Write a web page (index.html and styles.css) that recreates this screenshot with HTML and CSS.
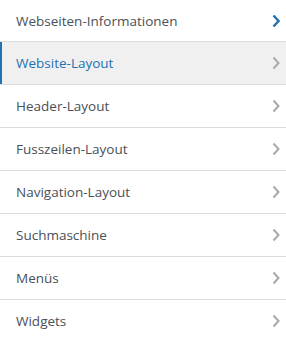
FILE: index.html
```html
<!DOCTYPE html>
<html lang="de">
<head>
    <meta charset="UTF-8">
    <meta name="viewport" content="width=device-width, initial-scale=1.0">
    <title>Customizer</title>
    <link rel="stylesheet" href="styles.css">
</head>
<body>
    <ul class="panel-list">
        <li class="panel-item first">
            <span>Webseiten-Informationen</span>
            <svg class="chevron" viewBox="0 0 8 14"><path d="M1.5 1.5 L6.5 7 L1.5 12.5"/></svg>
        </li>
        <li class="panel-item active">
            <span>Website-Layout</span>
            <svg class="chevron" viewBox="0 0 8 14"><path d="M1.5 1.5 L6.5 7 L1.5 12.5"/></svg>
        </li>
        <li class="panel-item">
            <span>Header-Layout</span>
            <svg class="chevron" viewBox="0 0 8 14"><path d="M1.5 1.5 L6.5 7 L1.5 12.5"/></svg>
        </li>
        <li class="panel-item">
            <span>Fusszeilen-Layout</span>
            <svg class="chevron" viewBox="0 0 8 14"><path d="M1.5 1.5 L6.5 7 L1.5 12.5"/></svg>
        </li>
        <li class="panel-item">
            <span>Navigation-Layout</span>
            <svg class="chevron" viewBox="0 0 8 14"><path d="M1.5 1.5 L6.5 7 L1.5 12.5"/></svg>
        </li>
        <li class="panel-item">
            <span>Suchmaschine</span>
            <svg class="chevron" viewBox="0 0 8 14"><path d="M1.5 1.5 L6.5 7 L1.5 12.5"/></svg>
        </li>
        <li class="panel-item">
            <span>Menüs</span>
            <svg class="chevron" viewBox="0 0 8 14"><path d="M1.5 1.5 L6.5 7 L1.5 12.5"/></svg>
        </li>
        <li class="panel-item">
            <span>Widgets</span>
            <svg class="chevron" viewBox="0 0 8 14"><path d="M1.5 1.5 L6.5 7 L1.5 12.5"/></svg>
        </li>
    </ul>
</body>
</html>
```

FILE: styles.css
```css
body {
    margin: 0;
    background: #ffffff;
    font-family: "Open Sans", "Noto Sans", sans-serif;
}

.panel-list {
    list-style: none;
    margin: 0;
    padding: 0;
}

.panel-item {
    display: flex;
    align-items: center;
    justify-content: space-between;
    height: 42px;
    padding: 0 6px 0 16px;
    border-bottom: 1px solid #dcdcde;
    color: #4a5057;
    font-size: 13.5px;
    font-weight: 500;
    box-sizing: content-box;
}

.panel-item.first {
    height: 41px;
}

.panel-item.active {
    background-color: #f0f0f1;
    color: #2271b1;
    box-shadow: inset 2px 0 0 #2271b1;
}

.chevron {
    width: 8px;
    height: 14px;
    fill: none;
    stroke: #a7aaad;
    stroke-width: 2;
}

.panel-item.first .chevron {
    stroke: #2271b1;
    stroke-width: 2.4;
}
```
